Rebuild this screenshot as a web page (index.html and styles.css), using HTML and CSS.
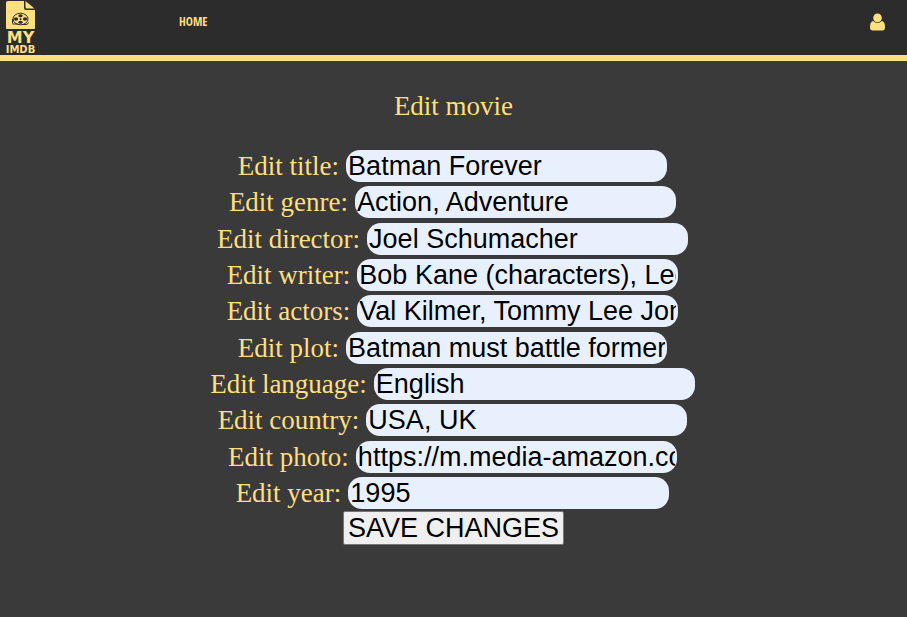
FILE: index.html
```html
<!DOCTYPE html>
<html lang="en">
<head>
  <meta charset="utf-8">
  <title>My IMDB - Edit movie</title>
  <link rel="stylesheet" href="styles.css">
</head>
<body>
  <header class="navbar">
    <a class="logo" href="#" aria-label="My IMDB home">
      <svg class="logo-reel" viewBox="0 0 30 30" aria-hidden="true">
        <path class="fill" d="M2 1H18V8Q18 10 20 10H29V28Q29 29 28 29H1Q0 29 0 28V3Q0 1 2 1Z"/>
        <path class="fill" d="M19.500 1L28.500 8.500H21Q19.500 8.500 19.500 7Z"/>
        <ellipse class="line" cx="14.500" cy="19" rx="7.500" ry="5.800"/>
        <ellipse class="hole" cx="14.500" cy="15.700" rx="2.200" ry="1.500"/>
        <ellipse class="hole" cx="14.500" cy="22.300" rx="2.200" ry="1.500"/>
        <ellipse class="hole" cx="10" cy="19" rx="2.100" ry="1.700"/>
        <ellipse class="hole" cx="19" cy="19" rx="2.100" ry="1.700"/>
        <circle class="hole" cx="14.500" cy="19" r="1"/>
        <path class="line" d="M6.500 19V23.500M6.500 24H12M17 24.500H20Q22 24.500 22.500 22.500"/>
      </svg>
      <span class="logo-my">MY</span>
      <span class="logo-name">IMDB</span>
    </a>
    <nav class="menu"><a class="menu-link" href="#">HOME</a></nav>
    <a class="account" href="#" aria-label="Account">
      <svg class="account-icon" viewBox="0 0 16 18" aria-hidden="true">
        <path class="fill" d="M3.500 8Q5.300 10 8 10T12.500 8Q16 8.500 16 14.500Q16 18 13 18H3Q0 18 0 14.500Q0 8.500 3.500 8Z"/>
        <circle class="fill" cx="8" cy="4.600" r="4.600"/>
      </svg>
    </a>
  </header>
  <main class="content">
    <h1 class="title">Edit movie</h1>
    <form class="form">
      <div class="fields">
        <div class="row"><label for="title">Edit title:</label><input id="title" type="text" value="Batman Forever"></div>
        <div class="row"><label for="genre">Edit genre:</label><input id="genre" type="text" value="Action, Adventure"></div>
        <div class="row"><label for="director">Edit director:</label><input id="director" type="text" value="Joel Schumacher"></div>
        <div class="row"><label for="writer">Edit writer:</label><input id="writer" type="text" value="Bob Kane (characters), Lee Batchler"></div>
        <div class="row"><label for="actors">Edit actors:</label><input id="actors" type="text" value="Val Kilmer, Tommy Lee Jones, Jim Carrey"></div>
        <div class="row"><label for="plot">Edit plot:</label><input id="plot" type="text" value="Batman must battle former"></div>
        <div class="row"><label for="language">Edit language:</label><input id="language" type="text" value="English"></div>
        <div class="row"><label for="country">Edit country:</label><input id="country" type="text" value="USA, UK"></div>
        <div class="row"><label for="photo">Edit photo:</label><input id="photo" type="text" value="https://m.media-amazon.com/images"></div>
        <div class="row"><label for="year">Edit year:</label><input id="year" type="text" value="1995"></div>
      </div>
      <button class="save" type="submit">SAVE CHANGES</button>
    </form>
  </main>
</body>
</html>
```
FILE: styles.css
```css
* {
  box-sizing: border-box;
}

body {
  margin: 0;
  background: #3a3a3a;
  color: #ffdf80;
  font-family: "Liberation Serif", "Times New Roman", serif;
  font-size: 27px;
}

a {
  color: inherit;
  text-decoration: none;
}

.navbar {
  display: flex;
  align-items: flex-start;
  height: 61px;
  padding: 0 22px 0 4px;
  background: #2c2c2c;
  border-bottom: 6px solid #ffdf80;
}

.logo {
  display: flex;
  flex-direction: column;
  align-items: center;
  width: 33px;
  font-family: "DejaVu Sans", sans-serif;
  font-weight: bold;
}

.logo-reel {
  width: 30px;
  height: 30px;
}

.logo-my {
  font-size: 16px;
  line-height: 15px;
}

.logo-name {
  font-size: 10px;
  line-height: 9px;
}

.fill {
  fill: #ffdf80;
}

.hole {
  fill: #2c2c2c;
}

.line {
  fill: none;
  stroke: #2c2c2c;
  stroke-width: 1;
}

.menu {
  flex: 1;
  padding: 14px 0 0 142px;
}

.menu-link {
  display: block;
  font: bold 12px/16px "Liberation Sans Narrow", "Open Sans Condensed", sans-serif;
}

.account {
  padding-top: 13px;
}

.account-icon {
  display: block;
  width: 15px;
  height: 18px;
}

.content {
  padding: 29px 0;
}

.title {
  margin: 0 0 28px;
  font-size: 27px;
  font-weight: normal;
  line-height: 32px;
  text-align: center;
}

.form {
  display: flex;
  flex-direction: column;
  align-items: center;
  gap: 2px;
}

.fields {
  display: flex;
  flex-direction: column;
  justify-content: space-between;
  min-height: 359px;
}

.row {
  display: flex;
  justify-content: center;
  gap: 7px;
  padding-right: 2px;
  line-height: 32px;
}

.row input {
  width: 321px;
  height: 32px;
  padding: 0 2px;
  border: 0;
  border-radius: 14px;
  background: #e8f0fe;
  color: #000;
  font: 27px/32px "Liberation Sans", Arial, sans-serif;
}

.save {
  padding: 0 4px;
  border: 1px solid #767676;
  border-radius: 2px;
  background: #efefef;
  color: #000;
  font: 27px/32px "Liberation Sans", Arial, sans-serif;
}
```
